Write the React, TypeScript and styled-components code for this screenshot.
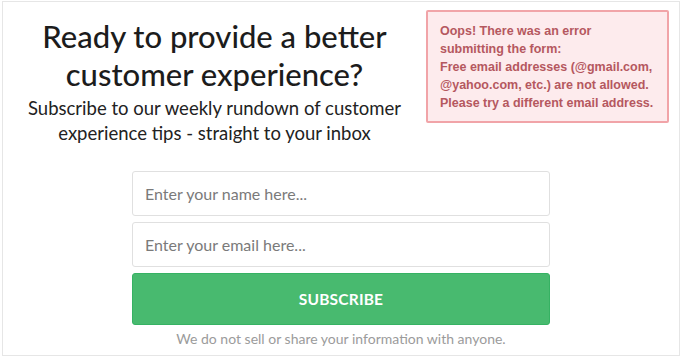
import { createGlobalStyle, styled } from 'styled-components';

const GlobalStyle = createGlobalStyle`
  html, body {
    margin: 0;
    padding: 0;
    background: #ffffff;
  }
  * {
    box-sizing: border-box;
  }
`;

const Frame = styled.div`
  width: 678px;
  height: 355px;
  margin: 1px 0 0 2px;
  border: 1px solid #e6e6e6;
  background: #ffffff;
  font-family: Lato, 'Open Sans', sans-serif;
  display: flex;
  flex-direction: column;
`;

const TopRow = styled.div`
  display: flex;
  align-items: flex-start;
  height: 163px;
  padding: 7px 10px 0 0;
`;

const Intro = styled.div`
  flex: 1;
  text-align: center;
  padding-top: 8px;
`;

const Heading = styled.h1`
  margin: 0;
  font-size: 31px;
  line-height: 38px;
  font-weight: 500;
  color: #1c1c1c;
`;

const Lead = styled.p`
  margin: 3px 0 0;
  font-size: 18.5px;
  line-height: 25px;
  color: #222222;
`;

const ErrorBox = styled.div`
  width: 243px;
  margin-top: 1px;
  padding: 10px 11px 9px 12px;
  background: #fdebed;
  border: 2px solid #f1a4a8;
  border-radius: 2px;
  font-family: 'Liberation Sans', Arial, sans-serif;
  font-weight: 700;
  font-size: 12.5px;
  line-height: 18px;
  color: #b5585f;
`;

const Form = styled.form`
  width: 418px;
  margin: 6px auto 0;
  display: flex;
  flex-direction: column;
  gap: 6px;
`;

const Field = styled.input`
  height: 45px;
  padding: 0 12px;
  border: 1px solid #e0e0e0;
  border-radius: 3px;
  font-family: Lato, 'Open Sans', sans-serif;
  font-size: 16px;
  color: #333333;
  outline: none;
  &::placeholder {
    color: #7a7a7a;
  }
`;

const SubmitButton = styled.button`
  height: 52px;
  border: 1px solid #36b263;
  border-radius: 3px;
  background: #48ba6f;
  color: #ffffff;
  font-family: Lato, 'Open Sans', sans-serif;
  font-weight: 700;
  font-size: 15.5px;
  letter-spacing: 0.2px;
  cursor: pointer;
`;

const Note = styled.p`
  margin: -1px 0 0;
  text-align: center;
  font-size: 14px;
  color: #9b9b9b;
`;

export default function App() {
  return (
    <>
      <GlobalStyle />
      <Frame>
        <TopRow>
          <Intro>
            <Heading>
              Ready to provide a better
              <br />
              customer experience?
            </Heading>
            <Lead>
              Subscribe to our weekly rundown of customer
              <br />
              experience tips - straight to your inbox
            </Lead>
          </Intro>
          <ErrorBox>
            Oops! There was an error
            <br />
            submitting the form:
            <br />
            Free email addresses (@gmail.com, @yahoo.com, etc.) are not allowed.
            Please try a different email address.
          </ErrorBox>
        </TopRow>
        <Form onSubmit={(e) => e.preventDefault()}>
          <Field type="text" placeholder="Enter your name here..." />
          <Field type="email" placeholder="Enter your email here..." />
          <SubmitButton type="submit">SUBSCRIBE</SubmitButton>
          <Note>We do not sell or share your information with anyone.</Note>
        </Form>
      </Frame>
    </>
  );
}
